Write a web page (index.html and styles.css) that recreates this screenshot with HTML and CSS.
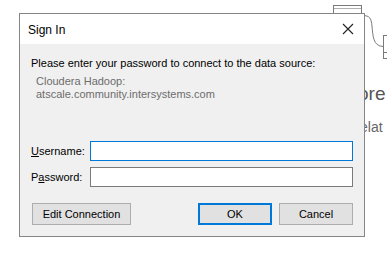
FILE: index.html
```html
<!DOCTYPE html>
<html lang="en">
<head>
    <meta charset="UTF-8">
    <title>Sign In</title>
    <link rel="stylesheet" href="styles.css">
</head>
<body>
    <div class="desk">
        <!-- bits of the model diagram behind the dialog -->
        <svg class="diagram" width="387" height="256" viewBox="0 0 387 256">
            <rect x="333.5" y="5.5" width="28" height="20" fill="#fff" stroke="#7a7a7a"/>
            <line x1="334" y1="8.5" x2="361" y2="8.5" stroke="#b0b0b0"/>
            <path d="M362 15.5 C370 15.5 371 18 372 26 C373 36 373 46 383 46.5" fill="none" stroke="#7a7a7a"/>
            <rect x="383.5" y="35.5" width="10" height="23" fill="#fff" stroke="#7a7a7a"/>
            <line x1="384" y1="52.5" x2="387" y2="52.5" stroke="#7a7a7a"/>
        </svg>
        <div class="bg-heading">ore</div>
        <div class="bg-text">elat</div>

        <div class="dialog">
            <div class="title-bar">
                <span class="title">Sign In</span>
                <svg class="close" width="12" height="12" viewBox="0 0 12 12">
                    <path d="M1 1 L11 11 M11 1 L1 11" stroke="#222" stroke-width="1.1"/>
                </svg>
            </div>
            <div class="body">
                <p class="message">Please enter your password to connect to the data source:</p>
                <div class="source">
                    <div>Cloudera Hadoop:</div>
                    <div>atscale.community.intersystems.com</div>
                </div>

                <div class="form">
                    <div class="row">
                        <label for="username"><u>U</u>sername:</label>
                        <input type="text" id="username" class="focused">
                    </div>
                    <div class="row">
                        <label for="password">P<u>a</u>ssword:</label>
                        <input type="password" id="password">
                    </div>
                </div>

                <div class="actions">
                    <button class="btn btn-edit">Edit Connection</button>
                    <div class="right">
                        <button class="btn btn-default">OK</button>
                        <button class="btn">Cancel</button>
                    </div>
                </div>
            </div>
        </div>
    </div>
</body>
</html>
```

FILE: styles.css
```css
body {
    margin: 0;
    background-color: #fff;
    font-family: "Liberation Sans", "Noto Sans", sans-serif;
    font-size: 11px;
    color: #000;
}

.desk {
    position: relative;
    width: 387px;
    height: 256px;
    overflow: hidden;
}

.diagram {
    position: absolute;
    left: 0;
    top: 0;
}

.bg-heading {
    position: absolute;
    left: 358px;
    top: 83px;
    font-size: 19px;
    color: #555;
}

.bg-text {
    position: absolute;
    left: 360px;
    top: 119px;
    font-size: 14px;
    color: #666;
}

.dialog {
    position: absolute;
    left: 19px;
    top: 13px;
    width: 344px;
    height: 222px;
    border: 1px solid #858585;
    background-color: #f0f0f0;
    display: flex;
    flex-direction: column;
}

.title-bar {
    height: 30px;
    background-color: #fff;
    display: flex;
    align-items: center;
    justify-content: space-between;
    padding: 0 10px 0 8px;
}

.title {
    font-size: 12px;
    margin-top: 1px;
}

.body {
    padding: 12px 10px 0 11px;
    white-space: nowrap;
}

.message {
    margin: 0;
    line-height: 15px;
}

.source {
    margin: 4px 0 0 5px;
    color: #6d6d6d;
    line-height: 13px;
}

.form {
    margin-top: 40px;
    display: flex;
    flex-direction: column;
    gap: 6px;
}

.row {
    display: flex;
    align-items: center;
}

.row label {
    width: 51px;
    text-align: right;
    margin-right: 8px;
}

.row input {
    width: 263px;
    height: 20px;
    margin: 0;
    padding: 0 3px;
    box-sizing: border-box;
    border: 1px solid #7a7a7a;
    background-color: #fff;
    font: inherit;
    outline: none;
}

.row input.focused {
    border-color: #0078d7;
}

.actions {
    margin-top: 16px;
    display: flex;
    justify-content: space-between;
    padding: 0 1px 0 1px;
}

.right {
    display: flex;
    gap: 7px;
}

.btn {
    height: 22px;
    width: 74px;
    padding: 0;
    box-sizing: border-box;
    border: 1px solid #adadad;
    background-color: #e1e1e1;
    font: inherit;
    color: #000;
}

.btn-edit {
    width: 99px;
}

.btn-default {
    border: 2px solid #0078d7;
}
```
